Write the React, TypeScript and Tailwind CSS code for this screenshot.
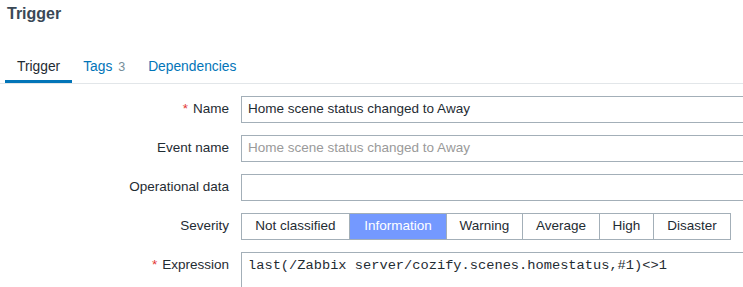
import React from 'react'

const severities = ['Not classified', 'Information', 'Warning', 'Average', 'High', 'Disaster']
const widths = ['w-[109px]', 'w-[98px]', 'w-[77px]', 'w-[78px]', 'w-[55px]', 'w-[78px]']

function Label({ text, required }: { text: string; required?: boolean }) {
  return (
    <div className="flex h-[27px] items-center justify-end text-[13.5px] text-[#1f2c33]">
      {required && <span className="mr-[5px] text-[#e33734]">*</span>}
      {text}
    </div>
  )
}

export default function App() {
  return (
    <div
      className="h-[287px] w-[743px] overflow-hidden bg-white"
      style={{ fontFamily: '"Liberation Sans", Arial, sans-serif' }}
    >
      {/* Page title */}
      <h1 className="pl-[7px] pt-[4px] text-[16px] font-bold leading-[20px] text-[#3a4856]">Trigger</h1>

      {/* Tabs */}
      <div className="mt-[34px] flex border-b border-[#e2e6e9] pl-[5px]">
        <div className="border-b-[3px] border-[#0275b8] px-3 pb-[5px] text-[13.8px] leading-[17px] text-[#1f2c33]">
          Trigger
        </div>
        <div className="px-[11px] pb-[5px] text-[13.8px] leading-[17px] text-[#0275b8]">
          Tags <span className="ml-[2px] text-[12.5px] text-[#768d99]">3</span>
        </div>
        <div className="px-[12px] pb-[5px] text-[13.8px] leading-[17px] text-[#0275b8]">Dependencies</div>
      </div>

      {/* Form */}
      <div className="grid grid-cols-[229px_1fr] gap-x-[12px] gap-y-[12px] pt-[12px]">
        <Label text="Name" required />
        <div className="flex h-[27px] w-[560px] items-center border border-[#a3afb8] px-[6px] text-[13.5px] text-[#1f2c33]">
          Home scene status changed to Away
        </div>

        <Label text="Event name" />
        <div className="flex h-[27px] w-[560px] items-center border border-[#a3afb8] px-[6px] text-[13.5px] text-[#9a9a9a]">
          Home scene status changed to Away
        </div>

        <Label text="Operational data" />
        <div className="h-[27px] w-[560px] border border-[#a3afb8]" />

        <Label text="Severity" />
        <div className="flex h-[27px]">
          {severities.map((s, i) => (
            <div
              key={s}
              className={
                'flex items-center justify-center border border-[#a3afb8] text-[13.5px] ' +
                widths[i] +
                (i > 0 ? ' -ml-px' : '') +
                (s === 'Information' ? ' bg-[#7499ff] text-white' : ' text-[#1f2c33]')
              }
            >
              {s}
            </div>
          ))}
        </div>

        <Label text="Expression" required />
        <div className="h-[60px] w-[560px] border border-[#a3afb8] px-[6px] pt-[5px] text-[13.7px] leading-[16px] text-[#1f2c33]" style={{ fontFamily: '"Liberation Mono", "Courier New", monospace' }}>
          last(/Zabbix server/cozify.scenes.homestatus,#1)&lt;&gt;1
        </div>
      </div>
    </div>
  )
}
